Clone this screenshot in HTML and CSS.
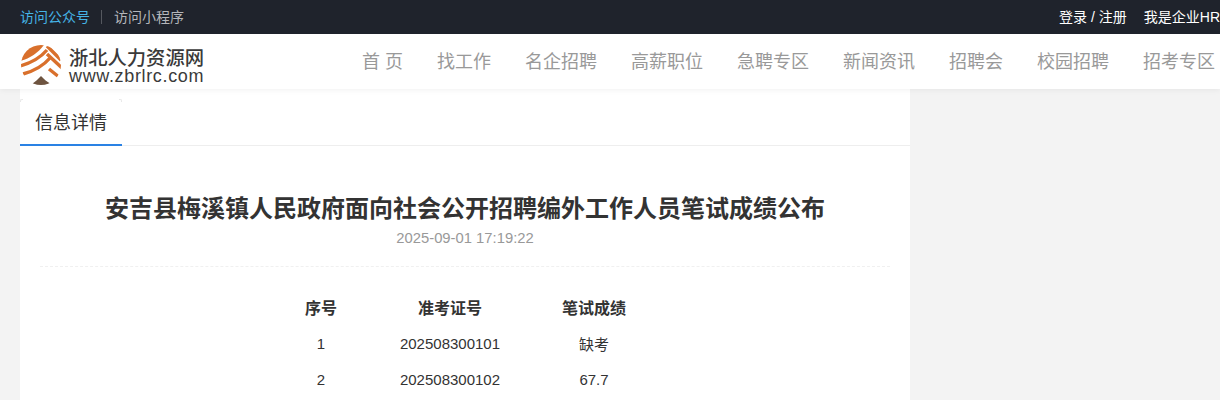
FILE: index.html
```html
<!DOCTYPE html>
<html lang="zh-CN">
<head>
    <meta charset="UTF-8">
    <meta name="viewport" content="width=device-width, initial-scale=1.0">
    <title>安吉县梅溪镇人民政府面向社会公开招聘编外工作人员笔试成绩公布 - 浙北人力资源网</title>
    <link rel="stylesheet" href="styles.css">
</head>
<body>
    <div class="topbar">
        <div class="topbar-left">
            <a class="top-link active" href="#">访问公众号</a>
            <span class="top-sep"></span>
            <a class="top-link" href="#">访问小程序</a>
        </div>
        <div class="topbar-right">
            <a class="top-link light" href="#">登录 / 注册</a>
            <a class="top-link light" href="#">我是企业HR</a>
        </div>
    </div>

    <header class="header">
        <a class="logo" href="#">
            <svg class="logo-icon" width="40" height="40" viewBox="0 0 40 40">
                <defs>
                    <clipPath id="logoDisc"><circle cx="20" cy="20" r="20"/></clipPath>
                </defs>
                <g clip-path="url(#logoDisc)">
                    <path d="M23 -1 L-1 -1 L-1 16 C8 14 17 8 23 0Z" fill="#d9702c"/>
                    <g fill="none" stroke="#d9702c" stroke-width="3.4">
                        <path d="M-1 21 C10 18 20 12 26 5"/>
                        <path d="M2 29 C13 26 23 20 29 13"/>
                        <path d="M26 1 L40 15"/>
                        <path d="M26 9 L41 23"/>
                        <path d="M28 24 L38 32"/>
                    </g>
                    <path d="M20 31 C17 34 14 37 11 39 L11 41 L30 41 L30 39 C26 37 23 34 20 31Z" fill="#6e5440"/>
                </g>
            </svg>
            <span class="logo-text">
                <span class="logo-name">浙北人力资源网</span>
                <span class="logo-url">www.zbrlrc.com</span>
            </span>
        </a>
        <nav class="nav">
            <a href="#">首 页</a>
            <a href="#">找工作</a>
            <a href="#">名企招聘</a>
            <a href="#">高薪职位</a>
            <a href="#">急聘专区</a>
            <a href="#">新闻资讯</a>
            <a href="#">招聘会</a>
            <a href="#">校园招聘</a>
            <a href="#">招考专区</a>
        </nav>
    </header>

    <div class="main">
        <div class="card">
            <div class="tabs">
                <div class="tab">信息详情</div>
            </div>
            <div class="article">
                <h1 class="title">安吉县梅溪镇人民政府面向社会公开招聘编外工作人员笔试成绩公布</h1>
                <div class="date">2025-09-01 17:19:22</div>
                <table class="scores">
                    <thead>
                        <tr>
                            <th class="col-no">序号</th>
                            <th class="col-id">准考证号</th>
                            <th class="col-score">笔试成绩</th>
                        </tr>
                    </thead>
                    <tbody>
                        <tr>
                            <td>1</td>
                            <td>202508300101</td>
                            <td>缺考</td>
                        </tr>
                        <tr>
                            <td>2</td>
                            <td>202508300102</td>
                            <td>67.7</td>
                        </tr>
                    </tbody>
                </table>
            </div>
        </div>
    </div>
</body>
</html>
```

FILE: styles.css
```css
html, body {
    height: 100%;
    overflow: hidden;
}

body {
    margin: 0;
    background-color: #f3f3f3;
    color: #333;
    font-family: "Liberation Sans", "Noto Sans CJK SC", sans-serif;
}

a {
    text-decoration: none;
    color: inherit;
}

.topbar {
    display: flex;
    justify-content: space-between;
    align-items: center;
    height: 32px;
    padding: 0 0 2px 20px;
    background-color: #1f232c;
    font-size: 14px;
    overflow: hidden;
}

.topbar-left, .topbar-right {
    display: flex;
    align-items: center;
}

.topbar-right {
    gap: 17px;
    white-space: nowrap;
}

.top-link {
    color: #b4b6ba;
}

.top-link.active {
    color: #45b4e6;
}

.top-link.light {
    color: #fff;
}

.top-sep {
    width: 1px;
    height: 14px;
    margin: 2px 12px 0 11px;
    background-color: #55585f;
}

.header {
    position: relative;
    display: flex;
    justify-content: space-between;
    align-items: center;
    height: 55px;
    padding: 0 5px 0 21px;
    background-color: #fff;
    box-shadow: 0 1px 6px rgba(0, 0, 0, 0.06);
}

.logo {
    display: flex;
    align-items: center;
    gap: 8px;
}

.logo-icon {
    margin-top: 7px;
}

.logo-text {
    display: flex;
    flex-direction: column;
    margin-top: 10px;
    color: #3a3a3a;
}

.logo-name {
    font-size: 19.3px;
    line-height: 18px;
    font-weight: 500;
}

.logo-url {
    font-size: 18px;
    line-height: 16px;
    letter-spacing: 0.65px;
}

.nav {
    display: flex;
    gap: 34px;
    margin-top: -4px;
    font-size: 18px;
    color: #999;
    white-space: nowrap;
}

.main {
    padding-left: 20px;
}

.card {
    width: 890px;
    height: 400px;
    padding-top: 10px;
    background-color: #fff;
}

.tabs {
    border-bottom: 1px solid #eee;
}

.tab {
    position: relative;
    width: 102px;
    height: 45px;
    margin-bottom: -1px;
    border-bottom: 2px solid #2a82e4;
    font-size: 18px;
    line-height: 49px;
    text-align: center;
}

.tab::before, .tab::after {
    content: "";
    position: absolute;
    top: 0;
    width: 2px;
    height: 2px;
    border-top: 1px solid #e8e8e8;
}

.tab::before {
    left: 0;
    border-left: 1px solid #e8e8e8;
    border-top-left-radius: 2px;
}

.tab::after {
    right: 0;
    border-right: 1px solid #e8e8e8;
    border-top-right-radius: 2px;
}

.article {
    padding: 0 20px;
}

.title {
    margin: 46px 0 0;
    font-size: 24px;
    line-height: 34px;
    font-weight: bold;
    text-align: center;
}

.date {
    margin-top: 2px;
    padding-bottom: 18px;
    border-bottom: 1px dashed #f0f0f0;
    color: #999;
    font-size: 14.8px;
    line-height: 20px;
    text-align: center;
}

.scores {
    margin: 22px 0 0 240px;
    border-collapse: collapse;
    font-size: 15px;
}

.scores th, .scores td {
    height: 36px;
    padding: 0;
    text-align: center;
}

.scores th {
    font-size: 16px;
}

.col-no {
    width: 82px;
}

.col-id {
    width: 176px;
}

.col-score {
    width: 112px;
}
```
